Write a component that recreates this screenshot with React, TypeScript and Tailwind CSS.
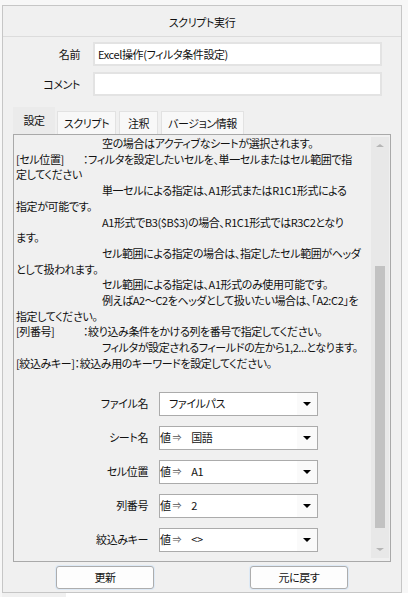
const lines: { indent?: boolean; label?: string; text: string }[] = [
  { indent: true, text: "空の場合はアクティブなシートが選択されます。" },
  { label: "[セル位置]", text: "：フィルタを設定したいセルを、単一セルまたはセル範囲で指" },
  { text: "定してください" },
  { indent: true, text: "単一セルによる指定は、A1形式またはR1C1形式による" },
  { text: "指定が可能です。" },
  { indent: true, text: "A1形式でB3($B$3)の場合、R1C1形式ではR3C2となり" },
  { text: "ます。" },
  { indent: true, text: "セル範囲による指定の場合は、指定したセル範囲がヘッダ" },
  { text: "として扱われます。" },
  { indent: true, text: "セル範囲による指定は、A1形式のみ使用可能です。" },
  { indent: true, text: "例えばA2～C2をヘッダとして扱いたい場合は、「A2:C2」を" },
  { text: "指定してください。" },
  { label: "[列番号]", text: "：絞り込み条件をかける列を番号で指定してください。" },
  { indent: true, text: "フィルタが設定されるフィールドの左から1,2...となります。" },
  { text: "[絞込みキー]：絞込み用のキーワードを設定してください。" },
];

const params: { label: string; value: string; literal?: boolean }[] = [
  { label: "ファイル名", value: "ファイルパス" },
  { label: "シート名", value: "国語", literal: true },
  { label: "セル位置", value: "A1", literal: true },
  { label: "列番号", value: "2", literal: true },
  { label: "絞込みキー", value: "<>", literal: true },
];

const tabs = [
  { name: "設定", w: "w-[42px]", ml: "ml-0" },
  { name: "スクリプト", w: "w-[59px]", ml: "ml-[2px]" },
  { name: "注釈", w: "w-[39px]", ml: "ml-[3px]" },
  { name: "バージョン情報", w: "w-[83px]", ml: "ml-[3px]" },
];

function ParamSelect({ value, literal }: { value: string; literal?: boolean }) {
  return (
    <div className="flex items-center h-[24px] w-[159px] border border-[#ababab] bg-white">
      {literal ? (
        <div className="flex items-center flex-1 whitespace-nowrap">
          <span>値</span>
          <span className="text-[9px] text-[#555] ml-[2px]">⇒</span>
          <span className="ml-[10px]">{value}</span>
        </div>
      ) : (
        <div className="flex-1 pl-[9px] whitespace-nowrap">{value}</div>
      )}
      <div className="w-[20px] h-full flex items-center justify-center bg-[#fafafa]">
        <div className="w-0 h-0 border-l-[4px] border-r-[4px] border-t-[4px] border-l-transparent border-r-transparent border-t-black" />
      </div>
    </div>
  );
}

export default function App() {
  return (
    <div className="w-[408px] h-[597px] bg-[#f7f7f7] text-[11px] tracking-[-0.4px] text-[#111] font-['Noto_Sans_CJK_JP','Noto_Sans',sans-serif] [font-feature-settings:'palt'] leading-none overflow-hidden">
      <div className="pt-[5px] pl-[2px]">
        <div className="w-[400px] h-[588px] border border-[#c6c6c6] bg-[#f0f0f0] flex flex-col">
          <div className="h-[31px] border-b border-[#dcdcdc] flex items-center justify-center pt-[2px]">
            スクリプト実行
          </div>

          <div className="flex items-center mt-[5px]">
            <div className="w-[77px] text-right">名前</div>
            <div className="ml-[13px] w-[289px] h-[24px] border-2 border-[#e3e3e3] bg-white flex items-center pl-[3px] whitespace-nowrap">
              Excel操作(フィルタ条件設定)
            </div>
          </div>
          <div className="flex items-center mt-[6px]">
            <div className="w-[77px] text-right">コメント</div>
            <div className="ml-[13px] w-[289px] h-[24px] border-2 border-[#e3e3e3] bg-white" />
          </div>

          <div className="flex items-end mt-[11px] ml-[10px] h-[27px]">
            {tabs.map((t, i) => (
              <div
                key={t.name}
                className={`${t.w} ${t.ml} flex items-center justify-center ${
                  i === 0
                    ? "h-[27px] bg-[#ebebeb]"
                    : "h-[23px] bg-[#f8f8f8] border border-b-0 border-[#e2e2e2]"
                }`}
              >
                {t.name}
              </div>
            ))}
          </div>

          <div className="ml-[10px] w-[378px] h-[428px] border border-[#a9a9a9] flex overflow-hidden">
            <div className="flex-1 pl-[2px] flex flex-col">
              <div className="leading-[15.7px] pt-[1px]">
                {lines.map((l, i) => (
                  <div key={i} className={`whitespace-nowrap ${l.indent ? "pl-[86px]" : ""}`}>
                    {l.label && <span className="inline-block w-[67px]">{l.label}</span>}
                    {l.text}
                  </div>
                ))}
              </div>
              <div className="flex flex-col gap-[10px] mt-[20px]">
                {params.map((p) => (
                  <div key={p.label} className="flex items-center">
                    <div className="w-[132px] text-right">{p.label}</div>
                    <div className="ml-[11px]">
                      <ParamSelect value={p.value} literal={p.literal} />
                    </div>
                  </div>
                ))}
              </div>
            </div>
            <div className="w-[18px] mt-[2px] mb-[3px] mr-[1px] bg-[#e8e8e8] flex flex-col items-center">
              <div className="h-[17px] flex items-center justify-center">
                <div className="w-0 h-0 border-l-[4px] border-r-[4px] border-b-[3px] border-l-transparent border-r-transparent border-b-[#b5b5b5]" />
              </div>
              <div className="mt-[112px] w-[10px] h-[262px] bg-[#c2c2c2]" />
              <div className="flex-1" />
              <div className="h-[17px] flex items-center justify-center">
                <div className="w-0 h-0 border-l-[4px] border-r-[4px] border-t-[3px] border-l-transparent border-r-transparent border-t-[#b5b5b5]" />
              </div>
            </div>
          </div>

          <div className="flex mt-[4px]">
            <button className="ml-[53px] w-[98px] h-[23px] rounded-[3px] border border-[#adadad] bg-[#fdfdfd] shadow-[0_0_0_1px_#dde9f5] flex items-center justify-center">
              更新
            </button>
            <button className="ml-[96px] w-[98px] h-[23px] rounded-[3px] border border-[#adadad] bg-[#fdfdfd] shadow-[0_0_0_1px_#dde9f5] flex items-center justify-center">
              元に戻す
            </button>
          </div>
        </div>
        <div className="flex h-[5px]">
          <div className="w-[64px] bg-[#f0f0f0]" />
          <div className="flex-1 bg-white" />
        </div>
      </div>
    </div>
  );
}
